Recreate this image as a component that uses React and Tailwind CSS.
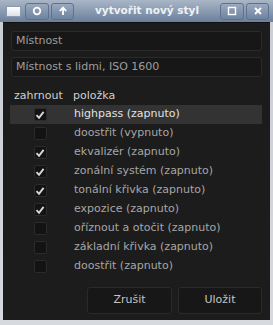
import React from 'react';

const items = [
  { label: 'highpass (zapnuto)', on: true, active: true },
  { label: 'doostřit (vypnuto)', on: false },
  { label: 'ekvalizér (zapnuto)', on: true },
  { label: 'zonální systém (zapnuto)', on: true },
  { label: 'tonální křivka (zapnuto)', on: true },
  { label: 'expozice (zapnuto)', on: true },
  { label: 'oříznout a otočit (zapnuto)', on: false },
  { label: 'základní křivka (zapnuto)', on: false },
  { label: 'doostřit (zapnuto)', on: false },
];

const TitleButton = ({ children, className = '' }) => (
  <div
    className={`flex h-[17px] items-center justify-center rounded-[3px] border border-[#5d7190] bg-gradient-to-b from-[#9aa9bd] to-[#6f839f] text-white ${className}`}
  >
    {children}
  </div>
);

const Check = ({ on }) => (
  <div className="flex h-[13px] w-[13px] items-center justify-center rounded-[2px] border border-[#2b2b2b] bg-[#131313]">
    {on && (
      <svg width="10" height="10" viewBox="0 0 10 10">
        <path d="M1.5 5.2 L4 7.8 L8.6 1.8" fill="none" stroke="#d8d8d8" strokeWidth="1.9" />
      </svg>
    )}
  </div>
);

export default function App() {
  return (
    <div
      className="flex h-[325px] w-[273px] flex-col bg-gradient-to-b from-[#c9ced5] to-[#d6d9dd]"
      style={{ fontFamily: '"DejaVu Sans", sans-serif' }}
    >
      <div className="flex h-[22px] items-center bg-gradient-to-b from-[#a9b6c6] to-[#6c809b] pl-[6px] pr-[4px]">
        <div className="mr-[4px] h-[11px] w-[15px] border border-[#8a9ab0] bg-gradient-to-b from-white to-[#dde2e8]" />
        <TitleButton className="w-[24px]">
          <svg width="10" height="10" viewBox="0 0 10 10">
            <circle cx="5" cy="5" r="3.3" fill="none" stroke="white" strokeWidth="1.8" />
          </svg>
        </TitleButton>
        <TitleButton className="ml-[2px] w-[23px]">
          <svg width="10" height="10" viewBox="0 0 10 10">
            <path d="M5 9 V2 M1.8 5 L5 1.6 L8.2 5" fill="none" stroke="white" strokeWidth="1.8" />
          </svg>
        </TitleButton>
        <div className="flex-1 text-center text-[10.5px] font-bold text-[#eef2f7]">vytvořit nový styl</div>
        <TitleButton className="w-[24px]">
          <svg width="10" height="10" viewBox="0 0 10 10">
            <rect x="1.5" y="1.5" width="7" height="7" fill="none" stroke="white" strokeWidth="1.4" />
          </svg>
        </TitleButton>
        <TitleButton className="ml-[2px] w-[23px]">
          <svg width="10" height="10" viewBox="0 0 10 10">
            <path d="M2 2 L8 8 M8 2 L2 8" fill="none" stroke="white" strokeWidth="1.9" />
          </svg>
        </TitleButton>
      </div>

      <div className="mx-[3px] mb-[5px] flex flex-1 flex-col border-t border-[#111] bg-[#1c1c1c] text-[11px]">
        <div className="mx-[8px] mt-[8px] flex flex-col gap-[6px]">
          <div className="flex h-[20px] items-center rounded-[3px] border border-[#2a2a2a] bg-[#171717] px-[4px] text-[#9e9e9e]">
            Místnost
          </div>
          <div className="flex h-[20px] items-center rounded-[3px] border border-[#2a2a2a] bg-[#171717] px-[4px] text-[#9e9e9e]">
            Místnost s lidmi, ISO 1600
          </div>
        </div>

        <div className="mx-[7px] mr-[8px] mt-[10px] flex flex-col">
          <div className="flex h-[18px] items-center text-[#cfcfcf]">
            <div className="w-[60px] pl-[4px]">zahrnout</div>
            <div className="pl-[3px]">položka</div>
          </div>
          {items.map((it) => (
            <div
              key={it.label}
              className={`flex h-[19px] items-center ${it.active ? 'bg-[#333333] text-[#e2e2e2]' : 'text-[#a6a6a6]'}`}
            >
              <div className="flex w-[60px] justify-center">
                <Check on={it.on} />
              </div>
              <div className="pl-[4px]">{it.label}</div>
            </div>
          ))}
        </div>

        <div className="mt-auto mb-[6px] mr-[8px] flex justify-end gap-[6px]">
          <button className="h-[27px] w-[85px] rounded-[3px] border border-[#2a2a2a] bg-[#171717] text-[#c4c4c4]">
            Zrušit
          </button>
          <button className="h-[27px] w-[84px] rounded-[3px] border border-[#2a2a2a] bg-[#171717] text-[#c4c4c4]">
            Uložit
          </button>
        </div>
      </div>
    </div>
  );
}
